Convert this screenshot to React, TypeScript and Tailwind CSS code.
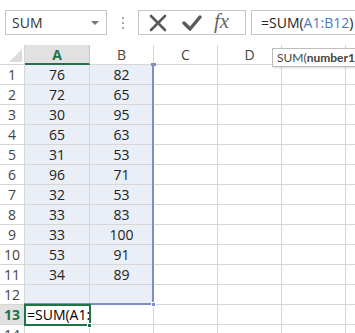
import React from 'react';

const data: [number, number][] = [
  [76, 82],
  [72, 65],
  [30, 95],
  [65, 63],
  [31, 53],
  [96, 71],
  [32, 53],
  [33, 83],
  [33, 100],
  [53, 91],
  [34, 89],
];

const cols = ['A', 'B', 'C', 'D', 'E', 'F'];
const colW = ['w-[65px]', 'w-[64px]', 'w-[64px]', 'w-[64px]', 'w-[64px]', 'w-[64px]'];

function XIcon() {
  return (
    <svg width="20" height="20" viewBox="0 0 20 20">
      <path d="M3 3 L17 17 M17 3 L3 17" stroke="#5a5a5a" strokeWidth="2.6" strokeLinecap="round" />
    </svg>
  );
}

function CheckIcon() {
  return (
    <svg width="20" height="20" viewBox="0 0 20 20">
      <path d="M2 10 L8 16 L18 4" stroke="#5a5a5a" strokeWidth="3.4" fill="none" strokeLinecap="round" strokeLinejoin="round" />
    </svg>
  );
}

export default function App() {
  return (
    <div className="relative w-[355px] h-[333px] overflow-hidden bg-white font-['Open_Sans','Noto_Sans',sans-serif] text-[#222]">
      {/* formula bar */}
      <div className="h-[45px] flex items-start pt-[10px] pl-[5px]">
        <div className="w-[102px] h-[25px] border border-[#c6c6c6] flex items-center justify-between pl-[6px] pr-[7px]">
          <span className="text-[14px] text-[#333]">SUM</span>
          <span className="w-0 h-0 border-l-[4px] border-r-[4px] border-t-[4px] border-l-transparent border-r-transparent border-t-[#777]" />
        </div>
        <div className="w-[31px] h-[25px] flex flex-col items-center justify-center gap-[3px]">
          <span className="w-[2px] h-[2px] bg-[#aaa]" />
          <span className="w-[2px] h-[2px] bg-[#aaa]" />
          <span className="w-[2px] h-[2px] bg-[#aaa]" />
        </div>
        <div className="w-[108px] h-[25px] border border-[#c6c6c6] flex items-center pl-[9px]">
          <XIcon />
          <span className="ml-[14px]"><CheckIcon /></span>
          <span className="ml-[12px] font-['Liberation_Serif',serif] italic text-[21px] leading-none text-[#666] -mt-[2px]">fx</span>
        </div>
        <div className="ml-[5px] flex-1 h-[25px] border border-r-0 border-[#c6c6c6] flex items-center pl-[9px] text-[14px] text-[#222] whitespace-nowrap">
          =SUM(<span className="text-[#4e79c4]">A1:B12</span>)
        </div>
      </div>

      {/* grid */}
      <div className="relative text-[14px]">
        <div className="flex h-[20px]">
          <div className="w-[25px] shrink-0 border-r border-b border-[#d6d6d6] flex items-end justify-end p-[2px]">
            <svg width="13" height="13" viewBox="0 0 13 13">
              <path d="M13 0 L13 13 L0 13 Z" fill="#dcdcdc" />
            </svg>
          </div>
          {cols.map((c, i) => (
            <div
              key={c}
              className={`${colW[i]} shrink-0 flex items-center justify-center border-r ${
                i === 0
                  ? 'bg-[#e1e1e1] text-[#217346] font-bold border-b-2 border-b-[#217346] border-r-[#c6c6c6]'
                  : 'border-b border-[#d6d6d6] text-[#444]'
              }`}
            >
              {c}
            </div>
          ))}
        </div>
        {Array.from({ length: 14 }, (_, r) => {
          const row = data[r];
          const inRange = r < 12;
          const active = r === 12;
          return (
            <div key={r} className="flex h-[20px]">
              <div
                className={`w-[25px] shrink-0 flex items-center justify-center border-r border-b border-[#d6d6d6] ${
                  active ? 'bg-[#e1e1e1] text-[#217346] font-bold' : 'text-[#444]'
                }`}
              >
                {r + 1}
              </div>
              {cols.map((c, i) => (
                <div
                  key={c}
                  className={`${colW[i]} shrink-0 flex items-center justify-center border-r border-b border-[#d6d6d6] ${
                    inRange && i < 2 ? 'bg-[#eaeef7]' : ''
                  }`}
                >
                  {row && i < 2 ? row[i] : null}
                  {active && i === 0 ? (
                    <span className="w-full pl-[2px] text-[14px] text-black whitespace-nowrap">=SUM(A1:</span>
                  ) : null}
                </div>
              ))}
            </div>
          );
        })}

        {/* range border A1:B12 */}
        <div className="absolute left-[24px] top-[19px] w-[130px] h-[241px] border-r-2 border-b-2 border-[#7a8fc2] pointer-events-none" />
        <div className="absolute left-[151px] top-[18px] w-[5px] h-[3px] bg-[#7a8fc2]" />
        <div className="absolute left-[151px] top-[257px] w-[5px] h-[5px] bg-[#7a8fc2] border border-white" />
        {/* active cell A13 */}
        <div className="absolute left-[24px] top-[259px] w-[67px] h-[22px] border-2 border-[#217346] pointer-events-none" />
        <div className="absolute left-[87px] top-[278px] w-[5px] h-[5px] bg-[#217346] border border-white" />
      </div>

      {/* tooltip */}
      <div className="absolute left-[272px] top-[48px] h-[19px] pl-[4px] pr-[8px] bg-white border border-[#bdbdbd] shadow-[1px_1px_2px_rgba(0,0,0,0.15)] flex items-center font-['Lato',sans-serif] text-[12px] text-[#444] whitespace-nowrap">
        SUM(<b className="font-bold">number1</b>, [number2], ...)
      </div>
    </div>
  );
}
